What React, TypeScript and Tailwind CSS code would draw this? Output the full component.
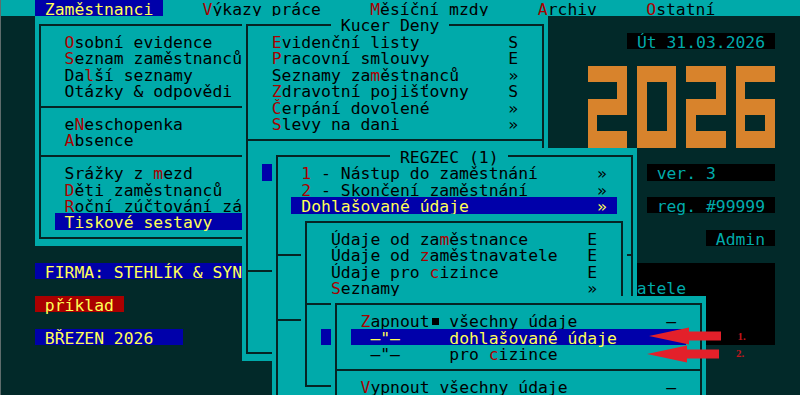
import type { ReactNode } from "react";

// text-mode screen: one cell = 9.866 x 16.43 px, column 0 starts at x=35
const SEP = "─";

const visLen = (s: string) => s.replace(/[{}\[\]<>]/g, "").length;
const lr = (left: string, right: string, at: number) =>
  left + " ".repeat(Math.max(0, at - visLen(left))) + right;

function inner(t: string): ReactNode[] {
  return t
    .split(/(\{.\}|■)/)
    .filter(Boolean)
    .map((p, k) => {
      if (p === "■")
        return (
          <span key={k} className="inline-block align-top w-[9.866px] h-[16.43px] pl-[2px] pt-[5.5px]">
            <span className="block w-[7px] h-[7px] bg-black" />
          </span>
        );
      if (p.length === 3 && p[0] === "{")
        return (
          <span key={k} className="text-[#aa0000]">
            {p[1]}
          </span>
        );
      return p;
    });
}

function Line({ s }: { s: string }) {
  if (s === SEP)
    return (
      <div className="h-[16.43px] flex items-center px-[3.93px]">
        <div className="h-[2px] w-full bg-[#062424]" />
      </div>
    );
  const parts = s.split(/(\[[^\]]*\]|<[^>]*>)/).filter(Boolean);
  return (
    <div className="h-[16.43px] leading-[19.4px] whitespace-pre">
      {parts.map((p, i) => {
        if (p[0] === "[")
          return (
            <span key={i} className="inline-block align-top h-[16.43px] bg-[#0000aa] text-[#ffff55]">
              {inner(p.slice(1, -1))}
            </span>
          );
        if (p[0] === "<")
          return (
            <span key={i} className="inline-block align-top h-[16.43px] bg-[#00aaaa]">
              {p.slice(1, -1)}
            </span>
          );
        return <span key={i}>{inner(p)}</span>;
      })}
    </div>
  );
}

function Win({ className, lines }: { className: string; lines: string[] }) {
  return (
    <div className={`absolute bg-[#00aaaa] text-black ${className}`}>
      <div className="absolute left-[3.93px] right-[3.93px] top-[7.2px] bottom-[7.2px] border-2 border-[#062424]" />
      <div className="relative">
        {lines.map((l, i) => (
          <Line key={i} s={l} />
        ))}
      </div>
    </div>
  );
}

function Cell({ text, className }: { text: string; className: string }) {
  return <div className={`h-[16.43px] leading-[19.4px] whitespace-pre ${className}`}>{text}</div>;
}

const menuA = [
  "",
  "   {O}sobní evidence",
  "   {S}eznam zaměstnanců",
  "   Da{l}ší seznamy",
  "   Otázky & odpovědi",
  SEP,
  "   e{N}eschopenka",
  "   {A}bsence",
  SEP,
  "   Srážky z {m}ezd",
  "   {D}ěti zaměstnanců",
  "   {R}oční zúčtování záloh",
  "  [ Tiskové sestavy      ]",
];

const kucer = [
  "         < Kucer Deny >",
  lr("   {E}videnční listy", "S", 27),
  lr("   {P}racovní smlouvy", "E", 27),
  lr("   Seznamy za{m}ěstnanců", "»", 27),
  lr("   {Z}dravotní pojišťovny", "S", 27),
  lr("   {Č}erpání dovolené", "»", 27),
  lr("   {S}levy na dani", "»", 27),
  SEP,
  "",
  "  [                           ]",
  "",
  "",
  "",
  "",
  "",
  SEP,
];

const regzec = [
  "            < REGZEC (1) >",
  lr("   {1} - Nástup do zaměstnání", "»", 33),
  lr("   {2} - Skončení zaměstnání", "»", 33),
  "  [" + lr(" Dohlašované údaje", "» ", 31) + "]",
  "",
  "",
  SEP,
  "",
  "",
  "",
  SEP,
];

const udaje = [
  "",
  lr("   Údaje od za{m}ěstnance", "E", 29),
  lr("   Údaje od {z}aměstnavatele", "E", 29),
  lr("   Údaje pro {c}izince", "E", 29),
  lr("   {S}eznamy", "»", 29),
  SEP,
  "",
  "  [                            ]",
];

const zapnout = [
  "",
  lr("   {Z}apnout■ všechny údaje", "–", 34),
  "  [" + lr('  –"–     dohlašované údaje', "", 34) + "]",
  '    –"–     pro {c}izince',
  SEP,
  lr("   {V}ypnout všechny údaje", "–", 34),
];

const digits: Record<string, string[]> = {
  "2": ["1111", "0001", "1111", "1000", "1111"],
  "0": ["1111", "1001", "1001", "1001", "1111"],
  "6": ["1111", "1000", "1111", "1001", "1111"],
};

function BigDigit({ d }: { d: string }) {
  return (
    <div className="grid grid-cols-[repeat(4,9.866px)] grid-rows-[repeat(5,16.43px)]">
      {digits[d].flatMap((row, r) =>
        row.split("").map((c, k) => (
          <div key={`${r}-${k}`} className={c === "1" ? "bg-[#d8832c]" : ""} />
        ))
      )}
    </div>
  );
}

function Arrow({ label }: { label: string }) {
  return (
    <div className="h-[17.5px] flex items-center gap-[9px]">
      <svg width="80" height="18" viewBox="0 0 80 18">
        <polygon points="0,9 40,0.5 40,4.5 72,4.5 72,13.5 40,13.5 40,17.5" fill="#e3202a" />
      </svg>
      <span className="font-['Liberation_Serif',serif] font-bold text-[11px] leading-none text-[#c0161c]">{label}</span>
    </div>
  );
}

export default function App() {
  return (
    <div className="relative w-[800px] h-[395px] overflow-hidden bg-[#022929] font-['DejaVu_Sans_Mono',monospace] text-[16.39px]">
      {/* menu bar */}
      <div className="h-[16.43px] bg-[#00aaaa] pl-[35px] text-black">
        <Line s="[ Zaměstnanci ]    {V}ýkazy práce     {M}ěsíční mzdy     {A}rchiv     {O}statní" />
      </div>

      {/* desktop behind the windows */}
      <div className="flex justify-between">
        <div className="pl-[35px] pt-[246.45px] flex flex-col items-start gap-[16.43px] text-[#ffff55]">
          <Cell text=" FIRMA: STEHLÍK & SYN " className="bg-[#0000aa]" />
          <Cell text=" příklad " className="bg-[#aa0000]" />
          <Cell text=" BŘEZEN 2026   " className="bg-[#0000aa]" />
        </div>
        <div className="pr-[25.05px] pt-[16.43px] flex flex-col items-end gap-[16.43px] text-[#00aaaa]">
          <Cell text=" Út 31.03.2026 " className="bg-black" />
          <div className="flex gap-[9.866px]" role="img" aria-label="2026">
            <BigDigit d="2" />
            <BigDigit d="0" />
            <BigDigit d="2" />
            <BigDigit d="6" />
          </div>
          <Cell text=" ver. 3      " className="bg-black" />
          <Cell text=" reg. #99999 " className="bg-black" />
          <Cell text=" Admin " className="bg-black" />
          <div className="w-[226.92px] h-[82.15px] bg-black pt-[16.43px]">
            <Cell text="zaměstnavatele" className="" />
          </div>
        </div>
      </div>

      {/* windows */}
      <Win className="left-[35px] top-[16.43px] w-[236.78px] h-[230.02px]" lines={menuA} />
      <Win className="left-[242.19px] top-[16.43px] w-[305.85px] h-[345.03px]" lines={kucer} />
      <Win className="left-[271.78px] top-[147.87px] w-[365.04px] h-[279.31px]" lines={regzec} />
      <Win className="left-[301.38px] top-[213.59px] w-[325.58px] h-[180.73px]" lines={udaje} />
      <Win className="left-[330.98px] top-[295.74px] w-[374.91px] h-[131.44px]" lines={zapnout} />

      {/* annotation arrows */}
      <div className="absolute left-[647px] top-[327.5px] flex flex-col">
        <div className="pl-[1.5px]">
          <Arrow label="1." />
        </div>
        <Arrow label="2." />
      </div>

      <div className="absolute left-0 top-0 bottom-0 w-px bg-[#5e6c6c]" />
    </div>
  );
}
